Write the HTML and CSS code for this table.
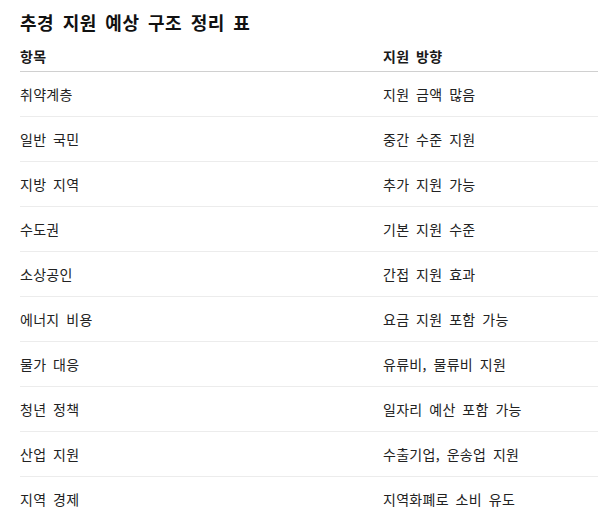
FILE: index.html
```html
<!DOCTYPE html>
<html lang="ko">
<head>
<meta charset="utf-8">
<link rel="stylesheet" href="styles.css">
</head>
<body>
<h3 class="title">추경 지원 예상 구조 정리 표</h3>
<table class="grid">
  <thead>
    <tr><th class="c1">항목</th><th class="c2">지원 방향</th></tr>
  </thead>
  <tbody>
    <tr><td>취약계층</td><td>지원 금액 많음</td></tr>
    <tr><td>일반 국민</td><td>중간 수준 지원</td></tr>
    <tr><td>지방 지역</td><td>추가 지원 가능</td></tr>
    <tr><td>수도권</td><td>기본 지원 수준</td></tr>
    <tr><td>소상공인</td><td>간접 지원 효과</td></tr>
    <tr><td>에너지 비용</td><td>요금 지원 포함 가능</td></tr>
    <tr><td>물가 대응</td><td>유류비, 물류비 지원</td></tr>
    <tr><td>청년 정책</td><td>일자리 예산 포함 가능</td></tr>
    <tr><td>산업 지원</td><td>수출기업, 운송업 지원</td></tr>
    <tr><td>지역 경제</td><td>지역화폐로 소비 유도</td></tr>
  </tbody>
</table>
</body>
</html>
```
FILE: styles.css
```css
html, body {
  margin: 0;
  background: #fff;
}
body {
  padding: 10px 0 0 20px;
  font-family: "Noto Sans CJK KR", "Noto Sans", sans-serif;
  color: #222;
  overflow: hidden;
}
.title {
  margin: 0 0 8px 0;
  font-size: 18px;
  line-height: 24px;
  font-weight: 700;
  color: #111;
  word-spacing: 3px;
  letter-spacing: 0.5px;
}
.grid {
  border-collapse: collapse;
  width: 578px;
  font-size: 14px;
  line-height: 20px;
  word-spacing: 2.5px;
  letter-spacing: 0.3px;
}
.grid th {
  text-align: left;
  font-weight: 700;
  padding: 4px 0 5px 0;
  border-bottom: 1px solid #d0d0d0;
  color: #1a1a1a;
}
.grid .c1 {
  width: 363px;
}
.grid td {
  padding: 12px 0;
  border-bottom: 1px solid #ececec;
  color: #222;
}
.grid tbody tr:last-child td {
  border-bottom: none;
}
```
